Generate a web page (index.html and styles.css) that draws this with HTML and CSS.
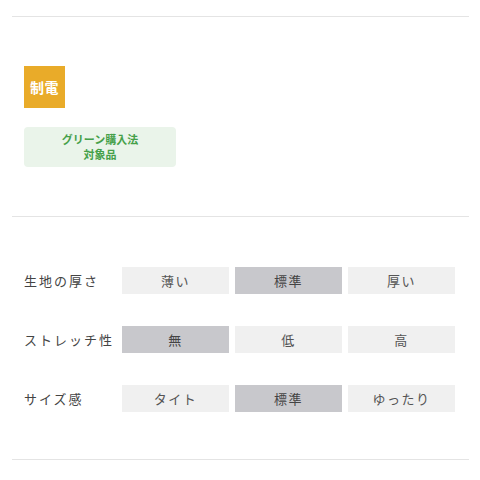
FILE: index.html
```html
<!DOCTYPE html>
<html lang="ja">
<head>
<meta charset="utf-8">
<link rel="stylesheet" href="styles.css">
</head>
<body>
<div class="page">
  <div class="divider"></div>
  <div class="section tags">
    <div class="badge">制電</div>
    <div class="green">グリーン購入法<br>対象品</div>
  </div>
  <div class="divider"></div>
  <div class="section specs">
    <div class="row">
      <div class="label">生地の厚さ</div>
      <div class="opt">薄い</div>
      <div class="opt on">標準</div>
      <div class="opt">厚い</div>
    </div>
    <div class="row">
      <div class="label">ストレッチ性</div>
      <div class="opt on">無</div>
      <div class="opt">低</div>
      <div class="opt">高</div>
    </div>
    <div class="row">
      <div class="label">サイズ感</div>
      <div class="opt">タイト</div>
      <div class="opt on">標準</div>
      <div class="opt">ゆったり</div>
    </div>
  </div>
  <div class="divider"></div>
</div>
</body>
</html>
```

FILE: styles.css
```css
html, body {
  margin: 0;
  padding: 0;
  background: #ffffff;
}
body {
  font-family: "Noto Sans CJK JP", "Noto Sans", sans-serif;
  color: #444;
}
.page {
  padding: 16px 11px 0 12px;
}
.divider {
  height: 1px;
  background: #e4e4e4;
}
.section.tags {
  padding: 49px 12px 49px 12px;
  display: flex;
  flex-direction: column;
  align-items: flex-start;
}
.badge {
  width: 41px;
  height: 42px;
  background: #e9ab29;
  color: #fff;
  font-weight: 700;
  font-size: 14px;
  display: flex;
  align-items: center;
  justify-content: center;
  letter-spacing: 0.5px;
}
.green {
  margin-top: 19px;
  width: 152px;
  height: 40px;
  box-sizing: border-box;
  background: #eaf4ea;
  border-radius: 4px;
  color: #45a049;
  font-size: 11px;
  font-weight: 700;
  line-height: 15px;
  text-align: center;
  display: flex;
  align-items: center;
  justify-content: center;
}
.section.specs {
  padding: 50px 14px 47px 12px;
  display: flex;
  flex-direction: column;
  gap: 32px;
}
.row {
  display: grid;
  grid-template-columns: 92px 107px 107px 107px;
  column-gap: 6px;
  height: 27px;
}
.label {
  font-size: 13px;
  letter-spacing: 2px;
  color: #444;
  display: flex;
  align-items: center;
  white-space: nowrap;
}
.opt {
  background: #f0f0f0;
  font-size: 13px;
  letter-spacing: 1.5px;
  color: #555;
  display: flex;
  align-items: center;
  justify-content: center;
}
.opt.on {
  background: #c8c8cc;
  color: #444;
}
```
